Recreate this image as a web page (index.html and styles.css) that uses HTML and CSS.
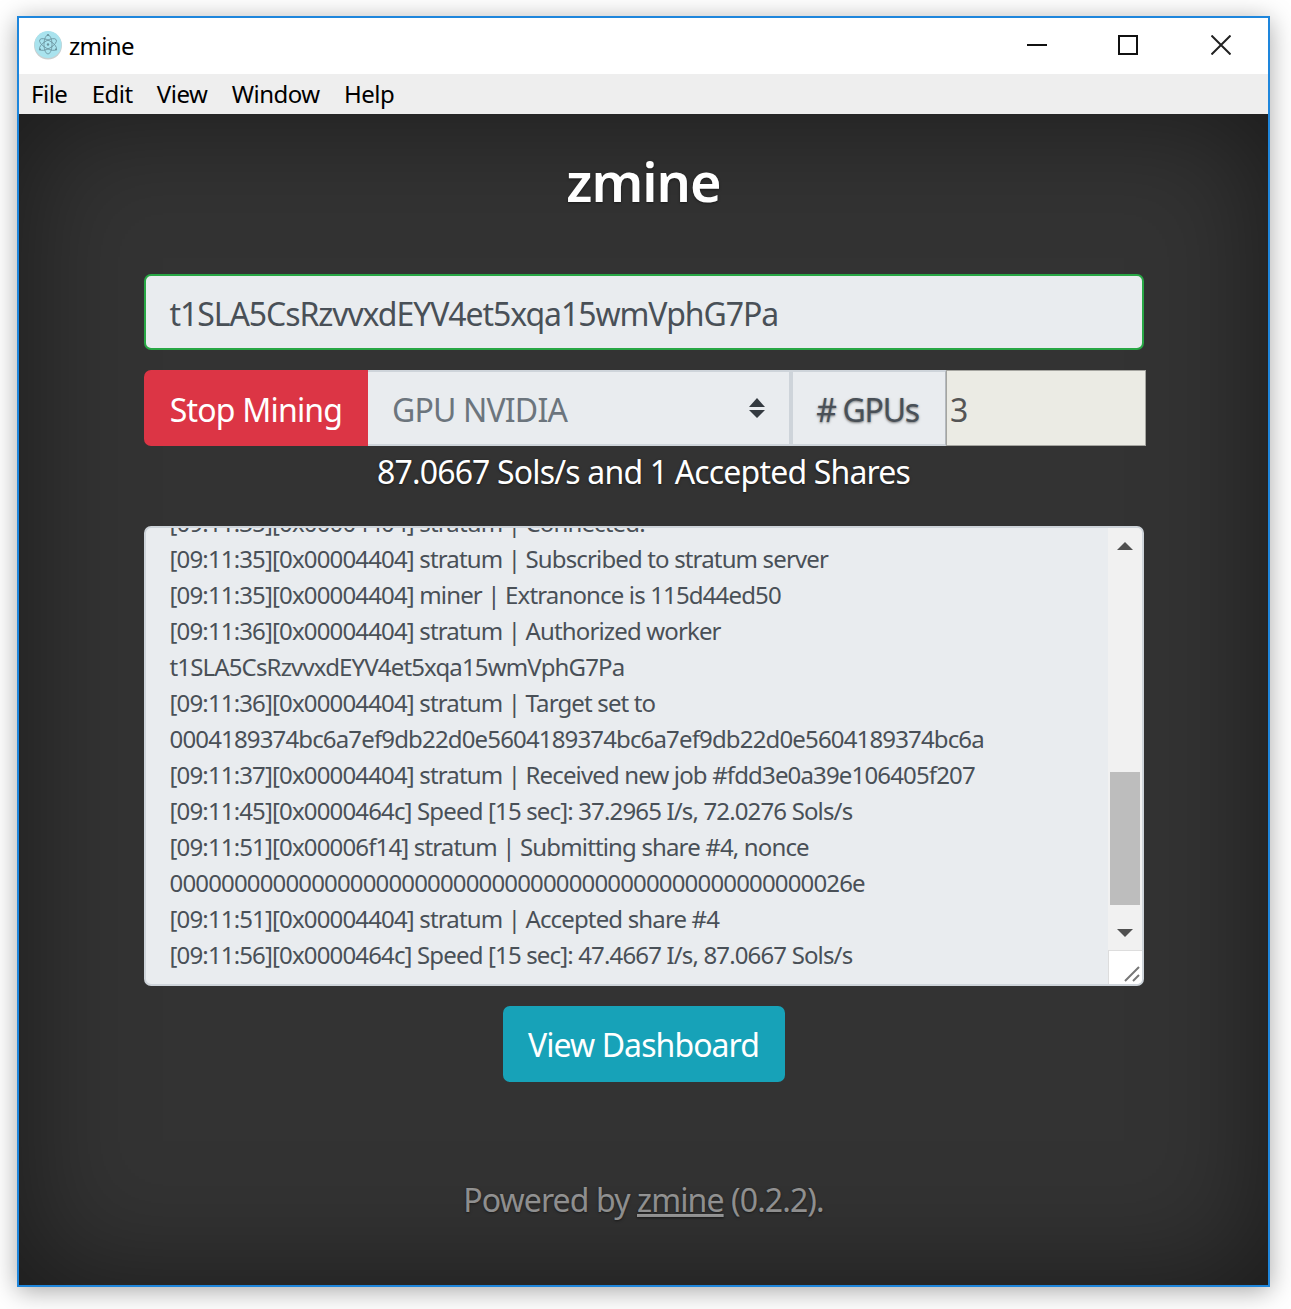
FILE: index.html
```html
<!DOCTYPE html>
<html lang="en">
<head>
<meta charset="utf-8">
<title>zmine</title>
<link rel="stylesheet" href="styles.css">
</head>
<body>
<div class="window">
  <header class="titlebar">
    <svg class="app-icon" viewBox="0 0 30 30" aria-hidden="true">
      <circle cx="15" cy="15.5" r="14" fill="#c9cfd0"/>
      <circle cx="15" cy="14.5" r="13.5" fill="#a9e3ee"/>
      <g fill="none" stroke="#6a929d" stroke-width=".8">
        <ellipse cx="15" cy="14.5" rx="9.5" ry="4" transform="rotate(30 15 14.5)"/>
        <ellipse cx="15" cy="14.5" rx="9.5" ry="4" transform="rotate(-30 15 14.5)"/>
        <ellipse cx="15" cy="14.5" rx="9.5" ry="4" transform="rotate(90 15 14.5)"/>
      </g>
      <g fill="#6a929d">
        <circle cx="15" cy="14.5" r="1.2"/>
        <circle cx="15" cy="5" r="1.1"/>
        <circle cx="7" cy="19.5" r="1.1"/>
        <circle cx="23" cy="19.5" r="1.1"/>
      </g>
    </svg>
    <span class="app-title">zmine</span>
    <div class="controls">
      <svg class="ctl ctl-min" viewBox="0 0 20 20" aria-hidden="true"><path d="M0 10H20" stroke="#111" stroke-width="2"/></svg>
      <svg class="ctl ctl-max" viewBox="0 0 20 20" aria-hidden="true"><rect x="1" y="1" width="18" height="18" fill="none" stroke="#111" stroke-width="2"/></svg>
      <svg class="ctl ctl-close" viewBox="0 0 20 20" aria-hidden="true"><path d="M.5 .5L19.5 19.5M19.5 .5L.5 19.5" stroke="#222" stroke-width="2"/></svg>
    </div>
  </header>
  <nav class="menubar">
    <span class="menu-item">File</span>
    <span class="menu-item">Edit</span>
    <span class="menu-item">View</span>
    <span class="menu-item">Window</span>
    <span class="menu-item">Help</span>
  </nav>
  <main class="content">
    <h1 class="heading">zmine</h1>
    <div class="address">t1SLA5CsRzvvxdEYV4et5xqa15wmVphG7Pa</div>
    <div class="controls-row">
      <button class="btn-stop">Stop Mining</button>
      <div class="gpu-select">
        <span>GPU NVIDIA</span>
        <svg class="updown" viewBox="0 0 16 20" aria-hidden="true"><path d="M8 0L16 9H0ZM0 12H16L8 20Z" fill="#343a40"/></svg>
      </div>
      <div class="gpu-label">#&nbsp;GPUs</div>
      <div class="gpu-count">3</div>
    </div>
    <p class="status">87.0667 Sols/s and 1 Accepted Shares</p>
    <div class="log">
      <div class="log-view">
        <div class="log-text">
          <div>[09:11:35][0x00004404] stratum | Connected!</div>
          <div>[09:11:35][0x00004404] stratum | Subscribed to stratum server</div>
          <div>[09:11:35][0x00004404] miner | Extranonce is 115d44ed50</div>
          <div>[09:11:36][0x00004404] stratum | Authorized worker</div>
          <div>t1SLA5CsRzvvxdEYV4et5xqa15wmVphG7Pa</div>
          <div>[09:11:36][0x00004404] stratum | Target set to</div>
          <div>0004189374bc6a7ef9db22d0e5604189374bc6a7ef9db22d0e5604189374bc6a</div>
          <div>[09:11:37][0x00004404] stratum | Received new job #fdd3e0a39e106405f207</div>
          <div>[09:11:45][0x0000464c] Speed [15 sec]: 37.2965 I/s, 72.0276 Sols/s</div>
          <div>[09:11:51][0x00006f14] stratum | Submitting share #4, nonce</div>
          <div>00000000000000000000000000000000000000000000000000026e</div>
          <div>[09:11:51][0x00004404] stratum | Accepted share #4</div>
          <div>[09:11:56][0x0000464c] Speed [15 sec]: 47.4667 I/s, 87.0667 Sols/s</div>
        </div>
      </div>
      <div class="scrollbar">
        <div class="sb-btn sb-btn-up"><svg class="sb-arrow" viewBox="0 0 16 8" aria-hidden="true"><path d="M8 0L16 8H0Z" fill="#505050"/></svg></div>
        <div class="sb-track"><div class="sb-thumb"></div></div>
        <div class="sb-btn"><svg class="sb-arrow" viewBox="0 0 16 8" aria-hidden="true"><path d="M0 0H16L8 8Z" fill="#505050"/></svg></div>
        <div class="sb-corner"><svg class="grip" viewBox="0 0 16 16" aria-hidden="true"><path d="M1 15L15 1M9 15L15 9" stroke="#777" stroke-width="2"/></svg></div>
      </div>
    </div>
    <button class="btn-dash">View Dashboard</button>
    <p class="footer">Powered by <a class="footer-link" href="#">zmine</a> (0.2.2).</p>
  </main>
</div>
</body>
</html>
```
FILE: styles.css
```css
* { box-sizing: border-box; }
html, body { margin: 0; background: #fff; }
body {
  padding: 16px 21px 22px 17px;
  height: 1309px;
  overflow: hidden;
  font-family: "Noto Sans", "Open Sans", sans-serif;
}
.window {
  display: flex;
  flex-direction: column;
  width: 1253px;
  height: 1271px;
  border: 2px solid #1e86dc;
  box-shadow: 0 4px 24px rgba(0,0,0,.35);
}
.titlebar {
  display: flex;
  align-items: center;
  height: 56px;
  flex: none;
  padding: 0 0 2px 14px;
  background: #fff;
}
.app-icon { width: 30px; height: 30px; flex: none; }
.app-title { margin-left: 6px; font-size: 24px; color: #000; letter-spacing: -.7px; }
.controls { display: flex; align-items: center; margin-left: auto; padding-right: 37px; }
.ctl { width: 20px; height: 20px; display: block; }
.ctl-max { margin-left: 71px; }
.ctl-close { margin-left: 73px; }
.menubar {
  display: flex;
  align-items: center;
  gap: 24.25px;
  height: 40px;
  flex: none;
  padding: 0 0 2px 12px;
  background: #eee;
  font-size: 24px;
  color: #000;
  letter-spacing: -.5px;
}
.content {
  flex: 1;
  display: flex;
  flex-direction: column;
  align-items: center;
  padding: 0 125px;
  background: #333;
  box-shadow: inset 0 0 120px rgba(0,0,0,.5);
  color: #fff;
  text-shadow: 0 1.2px 2.4px rgba(0,0,0,.5);
}
.heading {
  margin: 28px 0 0;
  font-size: 54px;
  line-height: 78px;
  font-weight: 600;
  letter-spacing: -1px;
}
.address {
  width: 1000px;
  height: 76px;
  margin-top: 54px;
  padding: 2px 24px 0;
  display: flex;
  align-items: center;
  background: #e9ecef;
  border: 2px solid #28a745;
  border-radius: 7px;
  color: #495057;
  font-size: 32px;
  text-shadow: none;
  letter-spacing: -1.07px;
}
.controls-row {
  display: flex;
  width: 1002px;
  height: 76px;
  margin-top: 20px;
  align-self: flex-start;
}
.btn-stop {
  width: 224px;
  padding: 2px 0 0;
  border: 0;
  border-radius: 7px 0 0 7px;
  background: #dc3545;
  color: #fff;
  font: inherit;
  font-size: 32px;
  letter-spacing: -.8px;
}
.gpu-select {
  width: 425px;
  display: flex;
  align-items: center;
  justify-content: space-between;
  padding: 0 24px;
  background: #e9ecef;
  border-top: 2px solid #ced4da;
  border-bottom: 2px solid #ced4da;
  border-right: 4px solid #ced4da;
  color: #6c757d;
  font-size: 32px;
  text-shadow: none;
  letter-spacing: -.84px;
}
.gpu-select span { padding-top: 2px; }
.updown { width: 16px; height: 20px; }
.gpu-label {
  width: 153px;
  display: flex;
  align-items: center;
  justify-content: center;
  padding: 2px 3px 0 0;
  background: #e9ecef;
  border: 2px solid #ced4da;
  border-left-width: 0;
  border-right: 1px solid #b4b9be;
  color: #495057;
  font-size: 32px;
  letter-spacing: -1.3px;
}
.gpu-count {
  width: 200px;
  display: flex;
  align-items: center;
  padding: 2px 0 0 3px;
  background: #ebebe4;
  border: 1px solid #a5a5a0;
  color: #555;
  font-size: 32px;
  letter-spacing: -.8px;
  text-shadow: none;
}
.status {
  margin: 8px 0 0;
  font-size: 32px;
  line-height: 36px;
  letter-spacing: -.83px;
}
.log {
  display: flex;
  width: 1000px;
  height: 460px;
  margin-top: 36px;
  overflow: hidden;
  background: #e9ecef;
  border: 2px solid #ced4da;
  border-radius: 7px;
  text-shadow: none;
}
.log-view { flex: 1; min-width: 0; overflow: hidden; padding-left: 24px; }
.log-text {
  margin-top: -23px;
  color: #495057;
  font-size: 24px;
  line-height: 36px;
  white-space: nowrap;
  letter-spacing: -.85px;
}
.scrollbar { width: 34px; flex: none; display: flex; flex-direction: column; background: #f1f1f1; }
.sb-btn { height: 34px; flex: none; display: flex; align-items: center; justify-content: center; }
.sb-btn-up { padding-top: 2px; }
.sb-arrow { width: 16px; height: 8px; }
.sb-track { flex: 1; padding: 210px 2px 0; }
.sb-thumb { height: 133px; background: #bdbdbd; }
.sb-corner {
  height: 34px;
  flex: none;
  display: flex;
  align-items: flex-end;
  justify-content: flex-end;
  padding: 0 2px 2px 0;
  background: #fff;
  border-top: 1px solid #ddd;
  border-left: 1px solid #ddd;
}
.grip { width: 16px; height: 16px; }
.btn-dash {
  width: 282px;
  height: 76px;
  margin-top: 20px;
  border: 0;
  border-radius: 7px;
  background: #17a2b8;
  color: #fff;
  font: inherit;
  font-size: 32px;
  letter-spacing: -.93px;
}
.footer {
  margin: 98px 0 0;
  font-size: 32px;
  line-height: 40px;
  color: rgba(255,255,255,.5);
  letter-spacing: -.89px;
}
.footer-link { color: rgba(255,255,255,.5); text-decoration: underline; }
```
